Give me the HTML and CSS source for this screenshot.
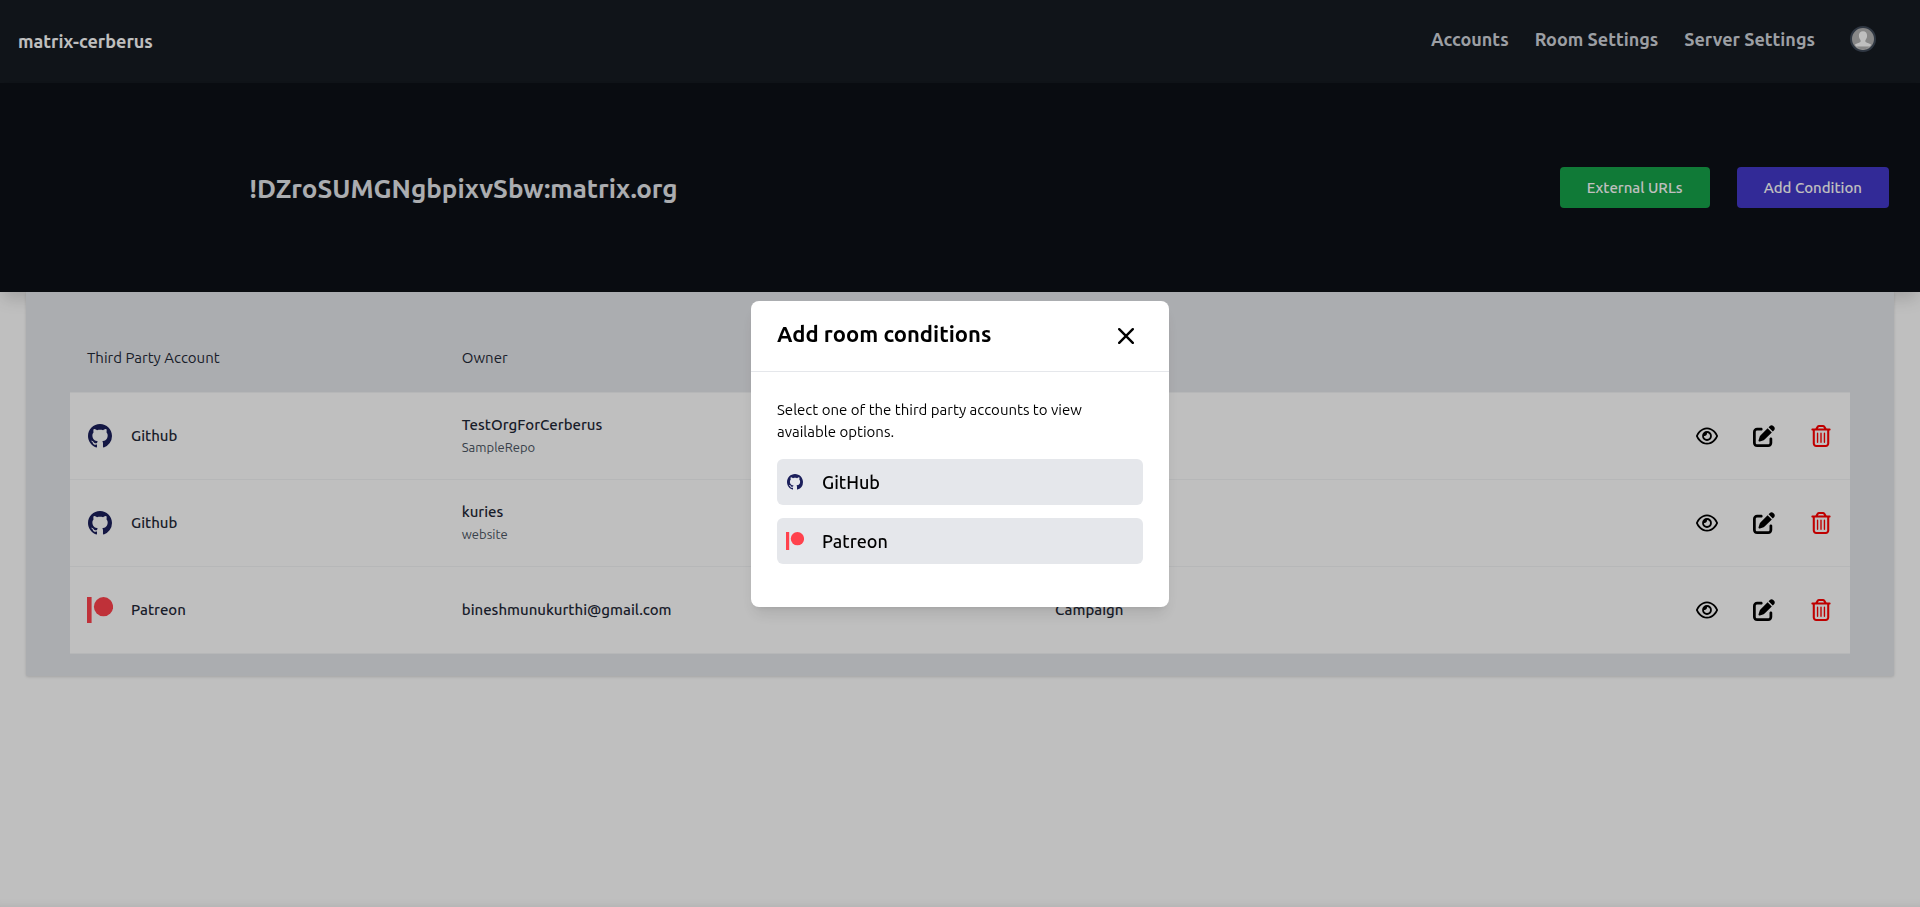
FILE: index.html
```html
<!DOCTYPE html>
<html lang="en">
<head>
<meta charset="utf-8">
<meta name="viewport" content="width=device-width, initial-scale=1">
<title>matrix-cerberus</title>
<link rel="stylesheet" href="styles.css">
</head>
<body>
<svg class="sprite" aria-hidden="true">
  <symbol id="github" viewBox="0 0 16 16"><path d="M8 0C3.58 0 0 3.58 0 8c0 3.54 2.29 6.53 5.47 7.59.4.07.55-.17.55-.38 0-.19-.01-.82-.01-1.49-2.01.37-2.53-.49-2.69-.94-.09-.23-.48-.94-.82-1.13-.28-.15-.68-.52-.01-.53.63-.01 1.08.58 1.23.82.72 1.21 1.87.87 2.33.66.07-.52.28-.87.51-1.07-1.78-.2-3.64-.89-3.64-3.95 0-.87.31-1.59.82-2.15-.08-.2-.36-1.02.08-2.12 0 0 .67-.21 2.2.82.64-.18 1.32-.27 2-.27s1.36.09 2 .27c1.53-1.04 2.2-.82 2.2-.82.44 1.1.16 1.92.08 2.12.51.56.82 1.27.82 2.15 0 3.07-1.87 3.75-3.65 3.95.29.25.54.73.54 1.48 0 1.07-.01 1.93-.01 2.2 0 .21.15.46.55.38A8.01 8.01 0 0 0 16 8c0-4.42-3.58-8-8-8z"/></symbol>
  <symbol id="patreon" viewBox="0 0 26 26"><path d="M0 0h4.6v26H0z"/><circle cx="16.5" cy="9.7" r="9.6"/></symbol>
  <symbol id="eye" viewBox="0 0 576 512"><path d="M288 80c-65.2 0-118.8 29.6-159.9 67.7C89.6 183.5 63 226 49.4 256c13.6 30 40.2 72.5 78.6 108.3C169.2 402.4 222.8 432 288 432s118.8-29.6 159.9-67.7C486.4 328.5 513 286 526.6 256c-13.6-30-40.2-72.5-78.6-108.3C406.8 109.6 353.2 80 288 80zM95.4 112.6C142.5 68.8 207.2 32 288 32s145.5 36.8 192.6 80.6c46.8 43.5 78.1 95.4 93 131.1c3.3 7.9 3.3 16.7 0 24.6c-14.9 35.7-46.2 87.7-93 131.1C433.5 443.2 368.8 480 288 480s-145.5-36.8-192.6-80.6C48.6 356 17.3 304 2.5 268.3c-3.3-7.9-3.3-16.7 0-24.6C17.3 208 48.6 156 95.4 112.6zM288 336c44.2 0 80-35.8 80-80s-35.8-80-80-80c-.7 0-1.3 0-2 0c1.3 5.1 2 10.5 2 16c0 35.3-28.7 64-64 64c-5.5 0-10.9-.7-16-2c0 .7 0 1.3 0 2c0 44.2 35.8 80 80 80zm0-208a128 128 0 1 1 0 256 128 128 0 1 1 0-256z"/></symbol>
  <symbol id="edit" viewBox="0 0 512 512"><path d="M471.6 21.7c-21.9-21.9-57.3-21.9-79.2 0L362.3 51.7l97.9 97.9 30.1-30.1c21.9-21.9 21.9-57.3 0-79.2L471.6 21.7zm-299.2 220c-6.1 6.1-10.8 13.6-13.5 21.9l-29.6 88.8c-2.9 8.6-.6 18.1 5.8 24.6s15.9 8.7 24.6 5.8l88.8-29.6c8.2-2.7 15.7-7.4 21.9-13.5L437.7 172.3 339.7 74.3 172.4 241.7zM96 64C43 64 0 107 0 160V416c0 53 43 96 96 96H352c53 0 96-43 96-96V320c0-17.7-14.3-32-32-32s-32 14.3-32 32v96c0 17.7-14.3 32-32 32H96c-17.7 0-32-14.3-32-32V160c0-17.7 14.3-32 32-32h96c17.7 0 32-14.3 32-32s-14.3-32-32-32H96z"/></symbol>
  <symbol id="trash" viewBox="0 0 448 512"><path d="M170.5 51.6L151.5 80h145l-19-28.4c-1.5-2.2-4-3.6-6.7-3.6H177.1c-2.7 0-5.2 1.3-6.7 3.6zm147-26.6L354.2 80H368h48 8c13.3 0 24 10.7 24 24s-10.7 24-24 24h-8V432c0 44.2-35.8 80-80 80H112c-44.2 0-80-35.8-80-80V128H24c-13.3 0-24-10.7-24-24S10.7 80 24 80h8H80 93.8l36.7-55.1C140.9 9.4 158.4 0 177.1 0h93.7c18.7 0 36.2 9.4 46.6 24.9zM80 128V432c0 17.7 14.3 32 32 32H336c17.7 0 32-14.3 32-32V128H80zm80 64V400c0 8.8-7.2 16-16 16s-16-7.2-16-16V192c0-8.8 7.2-16 16-16s16 7.2 16 16zm80 0V400c0 8.8-7.2 16-16 16s-16-7.2-16-16V192c0-8.8 7.2-16 16-16s16 7.2 16 16zm80 0V400c0 8.8-7.2 16-16 16s-16-7.2-16-16V192c0-8.8 7.2-16 16-16s16 7.2 16 16z"/></symbol>
</svg>

<header class="topbar">
  <a class="brand" href="#">matrix-cerberus</a>
  <nav class="nav">
    <a href="#">Accounts</a>
    <a href="#">Room Settings</a>
    <a href="#">Server Settings</a>
    <button class="avatar" type="button" aria-label="Profile">
      <svg viewBox="0 0 26 26"><circle cx="13" cy="13" r="12" fill="#b4b4b4" stroke="#3f4a59" stroke-width="2"/><path fill="#fff" d="M13 5.2c2.700 0 4.200 1.900 4.100 4.600-.1 2-.8 3.500-1.700 4.400-.2 1.500.2 2 1.600 2.500 2 .7 3.500 1 4.200 2.100A10 10 0 0 1 13 23.300a10 10 0 0 1-8.200-4.500c.7-1.100 2.200-1.400 4.200-2.100 1.400-.5 1.800-1 1.600-2.500-.9-.9-1.600-2.400-1.700-4.400-.1-2.700 1.400-4.600 4.100-4.600z"/><path d="M6 20.500h14a10.500 10.500 0 0 1-14 0z" fill="#b4b4b4"/></svg>
    </button>
  </nav>
</header>

<section class="hero">
  <h1 class="room">!DZroSUMGNgbpixvSbw:matrix.org</h1>
  <div class="hero-actions">
    <button class="btn btn-green" type="button">External URLs</button>
    <button class="btn btn-indigo" type="button">Add Condition</button>
  </div>
</section>

<main class="panel">
  <table class="conditions">
    <colgroup><col class="col-account"><col class="col-owner"><col class="col-type"><col></colgroup>
    <thead>
      <tr><th>Third Party Account</th><th>Owner</th><th></th><th></th></tr>
    </thead>
    <tbody>
      <tr>
        <td><div class="account"><svg class="logo github"><use href="#github"/></svg>Github</div></td>
        <td><div>TestOrgForCerberus</div><div class="sub">SampleRepo</div></td>
        <td></td>
        <td><div class="actions">
          <button type="button" aria-label="View"><svg><use href="#eye"/></svg></button>
          <button type="button" aria-label="Edit"><svg><use href="#edit"/></svg></button>
          <button class="delete" type="button" aria-label="Delete"><svg><use href="#trash"/></svg></button>
        </div></td>
      </tr>
      <tr>
        <td><div class="account"><svg class="logo github"><use href="#github"/></svg>Github</div></td>
        <td><div>kuries</div><div class="sub">website</div></td>
        <td></td>
        <td><div class="actions">
          <button type="button" aria-label="View"><svg><use href="#eye"/></svg></button>
          <button type="button" aria-label="Edit"><svg><use href="#edit"/></svg></button>
          <button class="delete" type="button" aria-label="Delete"><svg><use href="#trash"/></svg></button>
        </div></td>
      </tr>
      <tr>
        <td><div class="account"><svg class="logo patreon"><use href="#patreon"/></svg>Patreon</div></td>
        <td>bineshmunukurthi@gmail.com</td>
        <td>Campaign</td>
        <td><div class="actions">
          <button type="button" aria-label="View"><svg><use href="#eye"/></svg></button>
          <button type="button" aria-label="Edit"><svg><use href="#edit"/></svg></button>
          <button class="delete" type="button" aria-label="Delete"><svg><use href="#trash"/></svg></button>
        </div></td>
      </tr>
    </tbody>
  </table>
</main>

<div class="overlay">
  <div class="modal" role="dialog" aria-modal="true" aria-labelledby="modal-title">
    <div class="modal-head">
      <h2 id="modal-title">Add room conditions</h2>
      <button class="close" type="button" aria-label="Close"><svg viewBox="0 0 16 16"><path d="M1.200 1.200l13.600 13.600M14.800 1.200L1.200 14.800" fill="none" stroke="#000" stroke-width="2.400" stroke-linecap="round"/></svg></button>
    </div>
    <div class="modal-body">
      <p>Select one of the third party accounts to view available options.</p>
      <button class="provider" type="button"><svg class="github"><use href="#github"/></svg>GitHub</button>
      <button class="provider" type="button"><svg class="patreon"><use href="#patreon"/></svg>Patreon</button>
    </div>
  </div>
</div>
</body>
</html>
```

FILE: styles.css
```css
*, *::before, *::after { box-sizing: border-box; }

body {
  margin: 0;
  min-height: 100vh;
  background: #fff;
  box-shadow: inset 0 -8px 8px -8px rgba(0, 0, 0, 0.1);
  color: #1f2937;
  font: 500 15px/22px Ubuntu, "Noto Sans", sans-serif;
}

h1, h2, p { margin: 0; }
a { color: inherit; text-decoration: none; }

button {
  border: 0;
  padding: 0;
  background: none;
  color: inherit;
  font: inherit;
  cursor: pointer;
}

svg { display: block; fill: currentColor; }
.sprite { position: absolute; width: 0; height: 0; }
.github { color: #1b1f5b; padding: 1px; }
.patreon { color: #ff424d; }

.topbar {
  display: flex;
  align-items: center;
  justify-content: space-between;
  min-height: 83px;
  padding: 0 44px 5px 18px;
  background: #161b22;
  font-size: 18px;
  font-weight: 600;
}
.brand { padding-top: 3px; color: #fff; }
.nav { display: flex; align-items: center; gap: 26px; color: #d1d5db; }
.avatar { margin-left: 9px; }
.avatar svg { width: 26px; height: 26px; }

.hero {
  display: flex;
  align-items: center;
  justify-content: space-between;
  min-height: 209px;
  padding: 0 31px 0 13%;
  background: #0d1117;
  box-shadow: 0 10px 15px -3px rgba(0, 0, 0, 0.15);
}
.room { padding-top: 2px; color: #e5e7eb; font-size: 26px; line-height: 36px; font-weight: 700; }
.hero-actions { display: flex; gap: 27px; }
.btn {
  padding: 10px 27px 9px;
  border-radius: 4px;
  color: #fff;
}
.btn-green { background: #16a34a; }
.btn-indigo { background: #4338ca; }

.panel {
  position: relative;
  margin: 0 26px;
  padding: 33px 44px 22px;
  background: #e5e7eb;
  border-radius: 0 0 2px 2px;
  box-shadow: 0 1px 3px rgba(0, 0, 0, 0.15);
}
.conditions { width: 100%; border-collapse: collapse; table-layout: fixed; }
.col-account { width: 21%; }
.col-owner { width: 33.333%; }
.col-type { width: 25%; }
th {
  height: 67px;
  padding: 0 18px;
  text-align: left;
  font-weight: 400;
}
th:first-child, td:first-child { padding-left: 17px; }
td { height: 87px; padding: 0 18px; }
tbody tr { background: #fff; border: solid #f3f4f6; border-width: 1px 0; }
.account { display: flex; align-items: center; gap: 18px; }
.logo { width: 26px; height: 26px; }
.sub { color: #4b5563; font-size: 13px; font-weight: 400; }
.actions { display: flex; justify-content: flex-end; gap: 35px; color: #000; }
.actions svg { width: 22px; height: 22px; }
.actions .delete { color: #f00; }

.overlay {
  position: fixed;
  inset: 0;
  display: flex;
  align-items: center;
  justify-content: center;
  background: rgba(0, 0, 0, 0.25);
}
.modal {
  width: 418px;
  max-width: 100%;
  border-radius: 8px;
  background: #fff;
  color: #000;
  box-shadow: 0 10px 15px -3px rgba(0, 0, 0, 0.1), 0 4px 6px -4px rgba(0, 0, 0, 0.1);
}
.modal-head {
  display: flex;
  align-items: center;
  justify-content: space-between;
  padding: 18px 35px 18px 26px;
  border-bottom: 1px solid #e5e7eb;
}
.modal-head h2 { padding-bottom: 4px; font-size: 22px; line-height: 30px; font-weight: 600; }
.close svg { width: 16px; height: 16px; }
.modal-body {
  display: flex;
  flex-direction: column;
  gap: 13px;
  padding: 26px 26px 43px;
  font-weight: 400;
}
.modal-body p { padding: 1px 0 3px; }
.provider {
  display: flex;
  align-items: center;
  gap: 18px;
  padding: 12px 9px;
  border-radius: 6px;
  background: #e5e7eb;
  font-size: 18px;
  font-weight: 500;
}
.provider svg { width: 18px; height: 18px; }
```
